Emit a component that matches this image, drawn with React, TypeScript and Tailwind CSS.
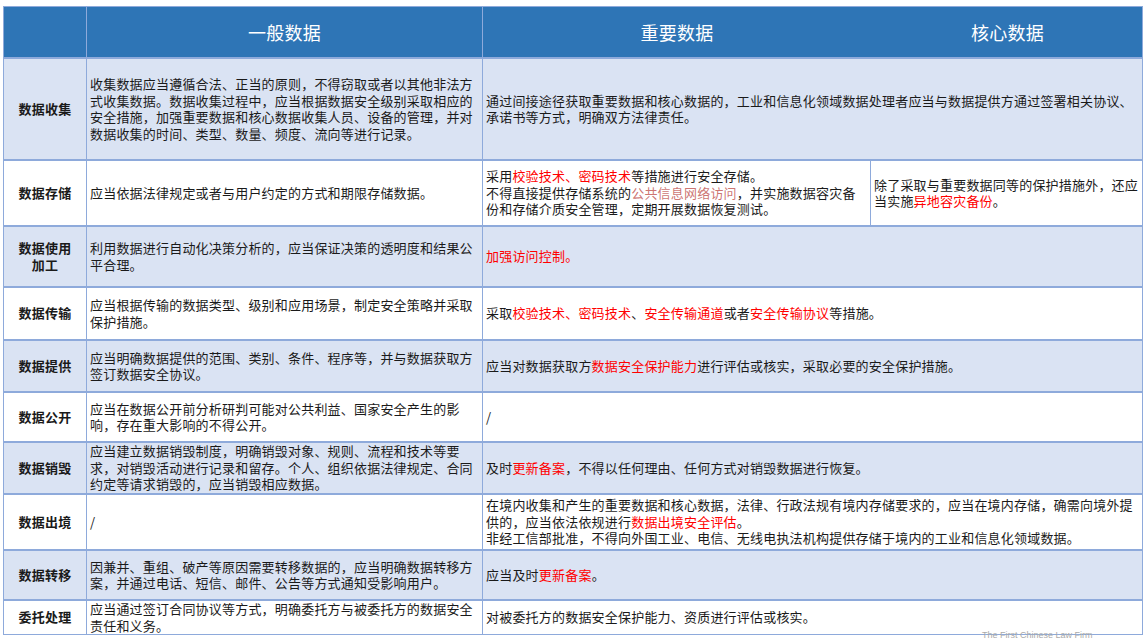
const R = ({ children }: { children: React.ReactNode }) => <span className="text-[#ff0000]">{children}</span>;
const B = ({ children }: { children: React.ReactNode }) => <span className="text-[#c0504d]/80">{children}</span>;

type Row = { label: React.ReactNode; h: number; shade: boolean; general: React.ReactNode; important: React.ReactNode; core?: React.ReactNode };

const rows: Row[] = [
  { label: "数据收集", h: 102, shade: true, general: "收集数据应当遵循合法、正当的原则，不得窃取或者以其他非法方式收集数据。数据收集过程中，应当根据数据安全级别采取相应的安全措施，加强重要数据和核心数据收集人员、设备的管理，并对数据收集的时间、类型、数量、频度、流向等进行记录。", important: "通过间接途径获取重要数据和核心数据的，工业和信息化领域数据处理者应当与数据提供方通过签署相关协议、承诺书等方式，明确双方法律责任。" },
  { label: "数据存储", h: 66, shade: false, general: "应当依据法律规定或者与用户约定的方式和期限存储数据。", important: <>采用<R>校验技术、密码技术</R>等措施进行安全存储。<br />不得直接提供存储系统的<B>公共信息网络访问</B>，并实施数据容灾备份和存储介质安全管理，定期开展数据恢复测试。</>, core: <>除了采取与重要数据同等的保护措施外，还应当实施<R>异地容灾备份</R>。</> },
  { label: <>数据使用<br />加工</>, h: 61, shade: true, general: "利用数据进行自动化决策分析的，应当保证决策的透明度和结果公平合理。", important: <R>加强访问控制。</R> },
  { label: "数据传输", h: 53, shade: false, general: "应当根据传输的数据类型、级别和应用场景，制定安全策略并采取保护措施。", important: <>采取<R>校验技术、密码技术</R>、<R>安全传输通道</R>或者<R>安全传输协议</R>等措施。</> },
  { label: "数据提供", h: 52, shade: true, general: "应当明确数据提供的范围、类别、条件、程序等，并与数据获取方签订数据安全协议。", important: <>应当对数据获取方<R>数据安全保护能力</R>进行评估或核实，采取必要的安全保护措施。</> },
  { label: "数据公开", h: 50, shade: false, general: "应当在数据公开前分析研判可能对公共利益、国家安全产生的影响，存在重大影响的不得公开。", important: "/" },
  { label: "数据销毁", h: 52, shade: true, general: "应当建立数据销毁制度，明确销毁对象、规则、流程和技术等要求，对销毁活动进行记录和留存。个人、组织依据法律规定、合同约定等请求销毁的，应当销毁相应数据。", important: <>及时<R>更新备案</R>，不得以任何理由、任何方式对销毁数据进行恢复。</> },
  { label: "数据出境", h: 56, shade: false, general: "/", important: <>在境内收集和产生的重要数据和核心数据，法律、行政法规有境内存储要求的，应当在境内存储，确需向境外提供的，应当依法依规进行<R>数据出境安全评估</R>。<br />非经工信部批准，不得向外国工业、电信、无线电执法机构提供存储于境内的工业和信息化领域数据。</> },
  { label: "数据转移", h: 50, shade: true, general: "因兼并、重组、破产等原因需要转移数据的，应当明确数据转移方案，并通过电话、短信、邮件、公告等方式通知受影响用户。", important: <>应当及时<R>更新备案</R>。</> },
  { label: "委托处理", h: 35, shade: false, general: "应当通过签订合同协议等方式，明确委托方与被委托方的数据安全责任和义务。", important: "对被委托方的数据安全保护能力、资质进行评估或核实。" },
];

export default function App() {
  return (
    <div className="w-[1147px] h-[641px] bg-white relative overflow-hidden text-[#1a1a1a]" style={{ fontFamily: '"Noto Sans CJK SC", "Noto Sans", sans-serif' }}>
      <div className="ml-[3px] mt-[6px] w-[1140px] border border-[#8eaadb] text-[13px] leading-[16.5px] tracking-[0.2px]">
        <div className="grid grid-cols-[83px_396px_388px_273px] h-[50px] bg-[#2e75b6] text-white text-[18px]">
          <div className="border-r border-[#8eaadb]" />
          <div className="flex items-center justify-center border-r border-[#8eaadb]">一般数据</div>
          <div className="flex items-center justify-center">重要数据</div>
          <div className="flex items-center justify-center">核心数据</div>
        </div>
        {rows.map((r, i) => (
          <div key={i} className={`grid grid-cols-[83px_396px_388px_273px] border-t-2 border-[#8eaadb] ${r.shade ? "bg-[#dae3f3]" : "bg-white"}`} style={{ height: r.h }}>
            <div className="flex items-center justify-center text-center font-bold text-[13px] border-r border-[#8eaadb]">{r.label}</div>
            <div className="flex items-center px-[3px] border-r border-[#8eaadb]"><div>{r.general}</div></div>
            {r.core ? (
              <>
                <div className="flex items-center px-[3px] border-r border-[#8eaadb]"><div>{r.important}</div></div>
                <div className="flex items-center px-[3px]"><div>{r.core}</div></div>
              </>
            ) : (
              <div className="col-span-2 flex items-center px-[3px]"><div>{r.important}</div></div>
            )}
          </div>
        ))}
      </div>
      <div className="absolute left-[982px] top-[630px] text-[9px] leading-[11px] text-[#aaaaaa]" style={{ fontFamily: '"Liberation Sans", sans-serif' }}>The First Chinese Law Firm</div>
    </div>
  );
}
